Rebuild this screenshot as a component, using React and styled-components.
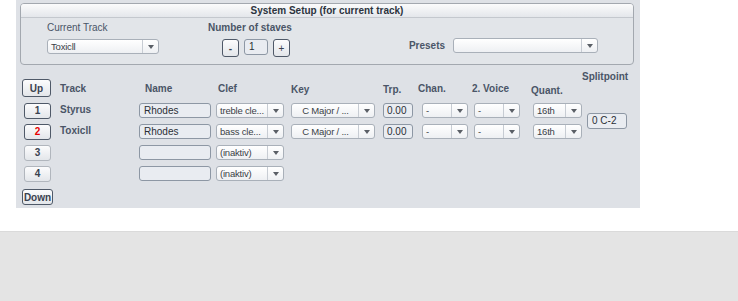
import styled, { createGlobalStyle } from "styled-components";

const Global = createGlobalStyle`
  body {
    margin: 0;
    background: #ffffff;
    font-family: "Liberation Sans", Arial, sans-serif;
  }
`;

const Page = styled.div`
  width: 738px;
  height: 301px;
  display: flex;
  flex-direction: column;
`;

const Panel = styled.div`
  margin-left: 16px;
  width: 624px;
  height: 208px;
  background: #dee1e6;
  padding: 3px 6px 0 4px;
  box-sizing: border-box;
`;

const SetupBox = styled.div`
  height: 62px;
  border: 1px solid #a3a8af;
  border-radius: 4px;
  box-sizing: border-box;
  background: #e2e5e9;
  display: flex;
  flex-direction: column;
`;

const SetupTitle = styled.div`
  height: 13px;
  line-height: 13px;
  border-bottom: 1px solid #c4c8ce;
  border-radius: 3px 3px 0 0;
  background: linear-gradient(#fbfbfc, #e4e7eb);
  text-align: center;
  font-size: 10px;
  font-weight: bold;
  color: #2c3440;
`;

const SetupBody = styled.div`
  flex: 1;
  display: flex;
  align-items: flex-start;
  padding: 4px 0 0 26px;
`;

const Group = styled.div`
  display: flex;
  flex-direction: column;
  align-items: flex-start;
  margin-right: ${(p) => p.$mr || 0}px;
`;

const Label = styled.div`
  font-size: 10px;
  font-weight: ${(p) => (p.$light ? "normal" : "bold")};
  color: #4a5567;
  height: 12px;
  line-height: 12px;
`;

const PresetRow = styled.div`
  display: flex;
  align-items: center;
  margin-top: 16px;
  gap: 8px;
`;

const StaveRow = styled.div`
  display: flex;
  gap: 5px;
  margin-top: 5px;
  margin-left: 14px;
`;

const ComboBox = styled.div`
  width: ${(p) => p.$w}px;
  height: 15px;
  display: flex;
  border: 1px solid #a9b0b9;
  border-radius: 3px;
  box-sizing: border-box;
  background: linear-gradient(#ffffff, #eef0f3);
  margin-top: ${(p) => p.$mt || 0}px;
`;

const ComboText = styled.div`
  flex: 1;
  font-size: 9.5px;
  letter-spacing: -0.2px;
  line-height: 13px;
  color: #3a3f46;
  padding: 0 2px 0 3px;
  text-align: ${(p) => (p.$center ? "center" : "left")};
  white-space: nowrap;
  overflow: hidden;
`;

const ComboArrow = styled.div`
  width: 15px;
  flex: none;
  border-left: 1px solid #c7ccd3;
  display: flex;
  align-items: center;
  justify-content: center;
  &::after {
    content: "";
    border-left: 3.5px solid transparent;
    border-right: 3.5px solid transparent;
    border-top: 4px solid #5a5f66;
  }
`;

const Combo = ({ w, text, center, mt }) => (
  <ComboBox $w={w} $mt={mt}>
    <ComboText $center={center}>{text}</ComboText>
    <ComboArrow />
  </ComboBox>
);

const Field = styled.div`
  width: ${(p) => p.$w}px;
  height: ${(p) => p.$h || 15}px;
  border: 1px solid #8d97a4;
  border-radius: 3px;
  box-sizing: border-box;
  background: #e9ecf1;
  font-size: 10px;
  line-height: ${(p) => (p.$h || 15) - 2}px;
  color: #2a2f36;
  padding: 0 ${(p) => p.$pad ?? 4}px;
  white-space: nowrap;
`;

const Btn = styled.div`
  width: ${(p) => p.$w}px;
  height: ${(p) => p.$h || 16}px;
  border: 1px solid ${(p) => (p.$off ? "#b1b6bd" : "#4f5968")};
  border-radius: 3px;
  box-sizing: border-box;
  background: linear-gradient(#fcfcfd, #e3e6ea);
  display: flex;
  align-items: center;
  justify-content: center;
  font-size: 10px;
  font-weight: ${(p) => (p.$thin ? "normal" : "bold")};
  color: ${(p) => p.$color || "#3a4250"};
`;

const RowBtn = styled(Btn)`
  grid-column: 1;
  margin-left: 2px;
`;

const EdgeBtn = styled(Btn)`
  grid-column: 1;
  align-self: ${(p) => p.$self || "center"};
`;

const Table = styled.div`
  margin-top: 14px;
  margin-left: 2px;
  display: grid;
  grid-template-columns: 38px 79px 77px 75px 92px 39px 52px 59px 54px 40px;
  grid-template-rows: 21px repeat(4, 21px) 26px;
  align-items: center;
`;

const Head = styled.div`
  font-size: 10px;
  font-weight: bold;
  color: #4a5567;
  margin-left: ${(p) => p.$ml || 0}px;
  margin-top: ${(p) => p.$mt || 0}px;
`;

const TrackName = styled.div`
  font-size: 10px;
  font-weight: bold;
  color: #4a5567;
  margin-top: -2px;
`;

const Split = styled.div`
  grid-column: 10;
  grid-row: 2 / span 2;
  align-self: center;
`;

const BottomBox = styled.div`
  margin-top: 23px;
  height: 70px;
  background: #e4e4e4;
  border-top: 1px solid #dadada;
`;

const rows = [
  { n: "1", track: "Styrus", name: "Rhodes", clef: "treble cle...", full: true },
  { n: "2", track: "Toxicll", name: "Rhodes", clef: "bass cle...", full: true, red: true },
  { n: "3", track: "", name: "", clef: "(inaktiv)", off: true },
  { n: "4", track: "", name: "", clef: "(inaktiv)", off: true },
];

export default function App() {
  return (
    <Page>
      <Global />
      <Panel>
        <SetupBox>
          <SetupTitle>System Setup (for current track)</SetupTitle>
          <SetupBody>
            <Group $mr={49}>
              <Label $light>Current Track</Label>
              <Combo w={112} text="Toxicll" mt={5} />
            </Group>
            <Group $mr={117}>
              <Label>Number of staves</Label>
              <StaveRow>
                <Btn $w={17} $h={18}>-</Btn>
                <Field $w={24} $h={16}>1</Field>
                <Btn $w={17} $h={18} $thin>+</Btn>
              </StaveRow>
            </Group>
            <PresetRow>
              <Label>Presets</Label>
              <Combo w={145} text="" />
            </PresetRow>
          </SetupBody>
        </SetupBox>

        <Table>
          <EdgeBtn $w={29} $h={18} $self="start">Up</EdgeBtn>
          <Head $mt={-2}>Track</Head>
          <Head $ml={6} $mt={-3}>Name</Head>
          <Head $ml={2} $mt={-3}>Clef</Head>
          <Head $mt={-1}>Key</Head>
          <Head $mt={-1}>Trp.</Head>
          <Head $ml={-4} $mt={-2}>Chan.</Head>
          <Head $ml={-2} $mt={-2}>2. Voice</Head>
          <Head $ml={-2} $mt={2}>Quant.</Head>
          <Head $ml={-5} $mt={-26}>Splitpoint</Head>

          {rows.map((r) => [
            <RowBtn key={r.n + "b"} $w={27} $off={r.off} $color={r.red ? "#e60000" : undefined}>
              {r.n}
            </RowBtn>,
            <TrackName key={r.n + "t"}>{r.track}</TrackName>,
            <Field key={r.n + "n"} $w={72}>{r.name}</Field>,
            <Combo key={r.n + "c"} w={68} text={r.clef} />,
            ...(r.full
              ? [
                  <Combo key={r.n + "k"} w={84} text="C Major / ..." center />,
                  <Field key={r.n + "p"} $w={30} $pad={3}>0.00</Field>,
                  <Combo key={r.n + "h"} w={46} text="-" />,
                  <Combo key={r.n + "v"} w={46} text="-" />,
                  <Combo key={r.n + "q"} w={49} text="16th" />,
                ]
              : []),
          ])}

          <Split>
            <Field $w={40} $h={16}>0 C-2</Field>
          </Split>

          <EdgeBtn $w={31} $h={16}>Down</EdgeBtn>
        </Table>
      </Panel>
      <BottomBox />
    </Page>
  );
}
